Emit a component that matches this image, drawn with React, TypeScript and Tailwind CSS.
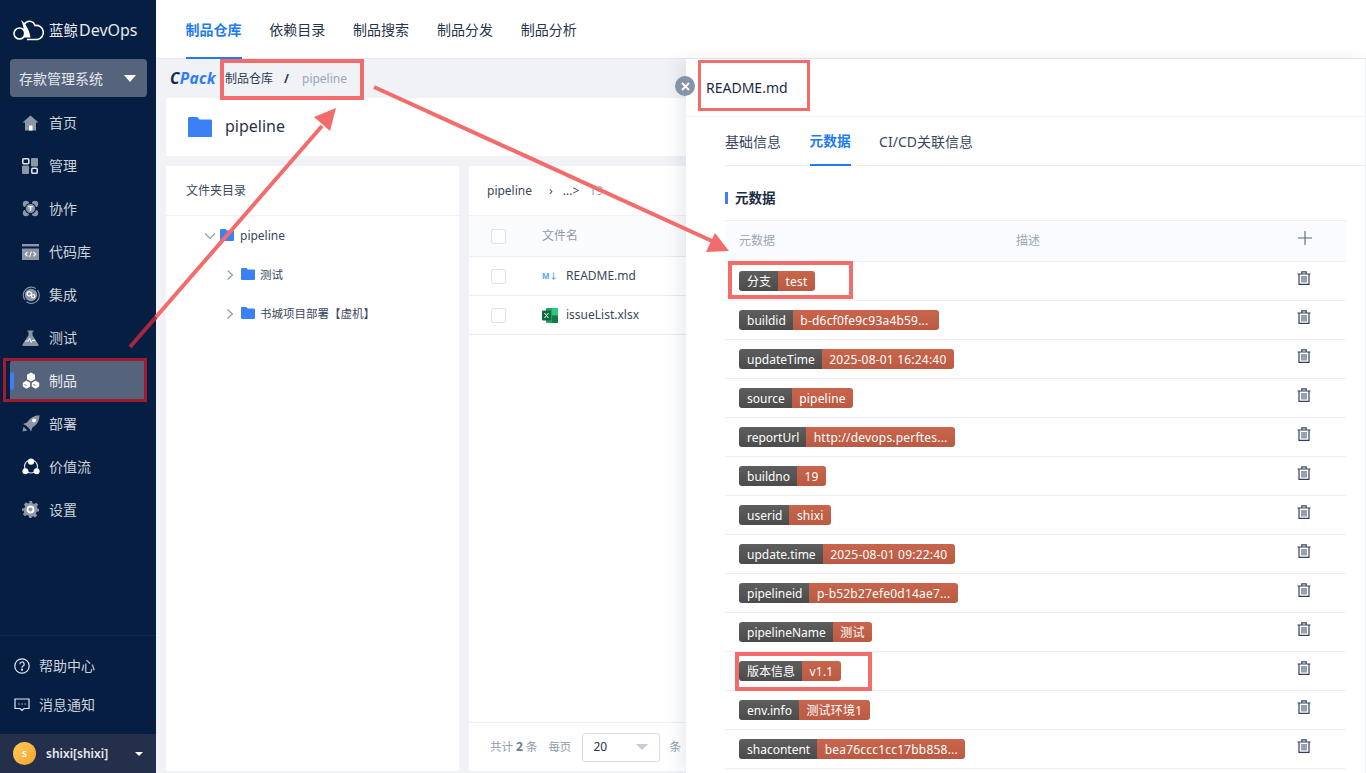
import React from "react";

const G = "#8b96a8";
const HomeI = () => (<svg width="17" height="16" viewBox="0 0 17 16"><path d="M8.5 0.5 L16.5 7.5 L14 7.5 L14 15.5 L3 15.5 L3 7.5 L0.5 7.5 Z" fill={G}/><rect x="7" y="10.5" width="3.5" height="5" fill="#fff"/></svg>);
const MgmtI = () => (<svg width="16" height="16" viewBox="0 0 16 16"><rect x="0.8" y="0.8" width="6" height="5" rx="1" fill="none" stroke="#dfe3ea" strokeWidth="1.6"/><rect x="9" y="0" width="7" height="8.5" rx="1" fill={G}/><rect x="0" y="7.5" width="7" height="8.5" rx="1" fill={G}/><rect x="9.8" y="10.3" width="5.4" height="5" rx="1" fill="none" stroke="#dfe3ea" strokeWidth="1.6"/></svg>);
const CollabI = () => (<svg width="17" height="17" viewBox="0 0 17 17"><circle cx="4" cy="4" r="3.2" fill={G}/><circle cx="13" cy="4" r="3.2" fill={G}/><circle cx="4" cy="13" r="3.2" fill={G}/><circle cx="13" cy="13" r="3.2" fill={G}/><circle cx="8.5" cy="8.5" r="5.6" fill="#051e42"/><circle cx="8.5" cy="8.5" r="4.6" fill={G}/><path d="M6.3 6.6h4.4M8.5 6.6v4.4" stroke="#fff" strokeWidth="1.4"/></svg>);
const CodeI = () => (<svg width="17" height="16" viewBox="0 0 17 16"><rect x="0" y="0" width="17" height="2.4" fill={G}/><rect x="0" y="4.5" width="17" height="11.5" fill={G}/><path d="M5.5 8 L3.4 10.2 L5.5 12.4 M11.5 8 L13.6 10.2 L11.5 12.4 M9.4 7.6 L7.6 12.8" fill="none" stroke="#fff" strokeWidth="1.1"/></svg>);
const IntegI = () => (<svg width="18" height="18" viewBox="0 0 18 18"><path d="M3 14A8 8 0 0 1 14 2.6M15.4 4.2A8 8 0 0 1 4.5 15.8" fill="none" stroke={G} strokeWidth="1.1"/><circle cx="9" cy="9" r="6.2" fill={G}/><circle cx="7.2" cy="7.8" r="2.1" fill="none" stroke="#fff" strokeWidth="1.2"/><circle cx="11.2" cy="10.2" r="1.7" fill="none" stroke="#fff" strokeWidth="1.2"/></svg>);
const TestI = () => (<svg width="17" height="16" viewBox="0 0 17 16"><path d="M5.5 0.5h6v1.2h-1v3.6l6 9.2c.4.7 0 1.5-.8 1.5H1.3c-.8 0-1.2-.8-.8-1.5l6-9.2V1.7h-1z" fill={G}/><path d="M3.4 11h3l1.2-3 1.6 4.4 1.1-2h3" fill="none" stroke="#fff" strokeWidth="1"/></svg>);
const ProductI = () => (<svg width="18" height="17" viewBox="0 0 18 17"><path d="M9 0.5 L13 2.8 V7.2 L9 9.5 L5 7.2 V2.8 Z" fill="#fff"/><path d="M4.5 8.5 L8.2 10.7 V14.6 L4.5 16.8 L0.8 14.6 V10.7 Z" fill="#fff"/><path d="M13.5 8.5 L17.2 10.7 V14.6 L13.5 16.8 L9.8 14.6 V10.7 Z" fill="#fff"/><path d="M2.5 12.5l2 1M11.5 12.5l2 1" stroke="#55637d" strokeWidth=".9"/></svg>);
const DeployI = () => (<svg width="18" height="17" viewBox="0 0 18 17"><path d="M17.5 0.3 C12 .6 7.8 3 5 7.5 L1 9 L4 10.5 L7.4 13.8 L9 16.6 L10.5 12.4 C15 9.8 17.4 5.8 17.5 0.3Z" fill={G}/><circle cx="12" cy="5.6" r="2" fill="#fff"/><path d="M0.5 16.5 L1.5 11.8 L5.4 15.6Z" fill={G}/></svg>);
const ValueI = () => (<svg width="18" height="17" viewBox="0 0 18 17"><circle cx="9" cy="8.5" r="6.5" fill="none" stroke="#dfe3ea" strokeWidth="1.2"/><circle cx="9" cy="3.6" r="3.2" fill="#fff"/><circle cx="3.4" cy="13.2" r="3" fill="#fff"/><circle cx="14.6" cy="13.2" r="3" fill="#fff"/></svg>);
const GearI = () => (<svg width="17" height="17" viewBox="0 0 17 17"><path d="M7 0h3l.5 2.3 1.6.7 2-1.3 2.1 2.1-1.3 2 .7 1.6L17 7.9v2.4l-2.4.5-.7 1.6 1.3 2-2.1 2.1-2-1.3-1.6.7L9.9 17H7.1l-.5-2.3-1.6-.7-2 1.3-2.1-2.1 1.3-2-.7-1.6L0 10.1V7.5l2.5-.5.7-1.6-1.3-2L4 1.3l2 1.3 1.6-.7z" fill={G}/><circle cx="8.5" cy="8.5" r="3" fill="none" stroke="#fff" strokeWidth="1.8"/></svg>);

const Trash = () => (
  <svg className="-mt-[7px]" width="14" height="14" viewBox="0 0 14 14" fill="none" stroke="#33435f" strokeWidth="1.2"><path d="M0.5 3h13M4.8 3V.8h4.4V3M2 3v10.4h10V3"/><path d="M5 5v6.5M7 5v6.5M9 5v6.5" strokeWidth="1"/></svg>
);
const BlueFolder = ({ s = 14 }: { s?: number }) => (
  <svg width={s} height={s * 0.86} viewBox="0 0 24 20.6"><path d="M1.5 0H8.5c.7 0 1.2.3 1.6.8L11.5 2.6H22.5C23.3 2.6 24 3.3 24 4.1V19c0 .9-.7 1.6-1.5 1.6H1.5C.7 20.6 0 19.9 0 19V1.5C0 .7.7 0 1.5 0Z" fill="#3c80f6"/></svg>
);

const nav = [
  ["首页", <HomeI />], ["管理", <MgmtI />], ["协作", <CollabI />], ["代码库", <CodeI />], ["集成", <IntegI />],
  ["测试", <TestI />], ["制品", <ProductI />], ["部署", <DeployI />], ["价值流", <ValueI />], ["设置", <GearI />],
] as const;

const meta: [string, string][] = [
  ["分支", "test"], ["buildid", "b-d6cf0fe9c93a4b59...\u00a0"], ["updateTime", "2025-08-01 16:24:40"], ["source", "pipeline"],
  ["reportUrl", "http://devops.perftes..."], ["buildno", "19"], ["userid", "shixi"], ["update.time", "2025-08-01 09:22:40"],
  ["pipelineid", "p-b52b27efe0d14ae7..."], ["pipelineName", "测试"], ["版本信息", "v1.1"], ["env.info", "测试环境1"], ["shacontent", "bea76ccc1cc17bb858..."],
];

const Chevron = () => (<svg width="8" height="12" viewBox="0 0 8 12" fill="none" stroke="#8c98aa" strokeWidth="1.1"><path d="M1.5 1.5 L6.5 6 L1.5 10.5"/></svg>);
const Check = () => <div className="w-[15px] h-[15px] rounded-[2px] border border-[#dde3ec] bg-white shrink-0" />;

export default function App() {
  return (
    <div className="relative w-[1366px] h-[773px] overflow-hidden flex bg-[#f0f2f6] text-[#1c2b45]" style={{ fontFamily: '"Noto Sans","Noto Sans CJK SC",sans-serif' }}>
      <aside className="w-[156px] shrink-0 h-full bg-[#051e42] flex flex-col">
        <div className="h-[59px] flex items-center pl-[13px] gap-[4px] text-[#e6e9ee]">
          <svg width="32" height="22" viewBox="0 0 32 22" fill="none" stroke="#fff" strokeWidth="1.6">
            <circle cx="6.500" cy="14.500" r="5.500" />
            <path d="M11 5.500 C14 1 20 1 22 6.500 A7 7 0 1 1 24.500 20.500 H14" />
            <path d="M8 1 C13 5 16.500 11 17.500 18.500 L10.500 18.500 C11.500 12 10.500 6 8 1Z" fill="#fff" stroke="none" />
          </svg>
          <span className="text-[14.500px] whitespace-nowrap">蓝鲸<span className="text-[16px] ml-[1px]">DevOps</span></span>
        </div>
        <div className="ml-[10px] mr-[9px] h-[38px] rounded-[4px] bg-[#55637d] flex items-center justify-between pl-[9px] pr-[11px] text-[14px] text-[#e4e7ec]">
          <span>存款管理系统</span>
          <span className="w-0 h-0 border-x-[6px] border-x-transparent border-t-[7px] border-t-white" />
        </div>
        <nav className="mt-[4px] flex flex-col">
          {nav.map(([t, ic]) => (
            <div key={t} className="h-[43px] flex items-center">
              <div className={`relative mx-[10px] w-[137px] h-[39px] flex items-center pl-[12px] rounded-[2px] text-[14px] ${t === "制品" ? "bg-[#55637d] text-[#e8ebf0]" : "text-[#cdd2db]"}`}>
                {t === "制品" && <span className="absolute left-0 top-[11px] w-[4px] h-[18px] rounded-[2px] bg-[#3c80f6]" />}
                <span className="w-[27px] flex items-center">{ic}</span>
                {t}
              </div>
            </div>
          ))}
        </nav>
        <div className="mt-auto border-t border-[#10294e] pt-[10px]">
          {[
            ["帮助中心", <svg width="16" height="16" viewBox="0 0 16 16" fill="none" stroke="#e6e9ee" strokeWidth="1.2"><circle cx="8" cy="8" r="7.2"/><path d="M5.8 6.2a2.2 2.2 0 1 1 3.3 1.9C8.4 8.500 8 9 8 9.800"/><circle cx="8" cy="11.700" r=".5" fill="#e6e9ee"/></svg>],
            ["消息通知", <svg width="16" height="14" viewBox="0 0 16 14" fill="none" stroke="#e6e9ee" strokeWidth="1.2"><path d="M1 1h14v9.500H10L8 12.500 6 10.500H1z"/><path d="M4.500 6h.8M7.600 6h.8M10.700 6h.8" strokeWidth="1.400"/></svg>],
          ].map(([t, ic]) => (
            <div key={t as string} className="h-[39px] flex items-center pl-[14px] gap-[9px] text-[14px] text-[#cdd2db]">{ic}<span>{t}</span></div>
          ))}
          <div className="mt-[10px] h-[39px] bg-[#242f4b] flex items-center pl-[13px] pr-[13px] text-[#e8ebf0]">
            <span className="w-[23px] h-[23px] rounded-full bg-gradient-to-br from-[#fdc95a] to-[#f5a623] flex items-center justify-center text-[10px] text-white font-semibold">s</span>
            <span className="ml-[10px] text-[12px] font-semibold whitespace-nowrap">shixi[shixi]</span>
            <span className="ml-auto w-0 h-0 border-x-[4px] border-x-transparent border-t-[4px] border-t-white" />
          </div>
        </div>
      </aside>

      <div className="flex-1 min-w-0 flex flex-col">
        <header className="h-[59px] shrink-0 bg-white border-b border-[#e6e9ef] flex pl-[29.500px] gap-[27.800px] text-[14px] text-[#27344a]">
          {["制品仓库", "依赖目录", "制品搜索", "制品分发", "制品分析"].map((t, i) => (
            <div key={t} className={`h-[59px] flex items-center ${i === 0 ? "relative text-[#1e7bf0] font-semibold" : ""}`}>
              {t}
              {i === 0 && <span className="absolute left-0 right-0 bottom-0 h-[2px] bg-[#1e7bf0]" />}
            </div>
          ))}
        </header>
        <div className="h-[39px] shrink-0 flex items-center pl-[14px] text-[12px]">
          <span className="text-[15.500px] font-bold italic tracking-[0.3px] w-[55px]"><span className="text-[#122a52]">C</span><span className="text-[#2f7df6]">Pack</span></span>
          <span className="text-[#2b3a52]">制品仓库</span>
          <span className="ml-[11px] mr-[13px] font-bold text-[#2b3a52]">/</span>
          <span className="text-[12px] text-[#9aa6b6]">pipeline</span>
        </div>
        <div className="ml-[10px] h-[58px] shrink-0 bg-white flex items-center pl-[22px] gap-[13px]">
          <BlueFolder s={24} />
          <span className="text-[16px] text-[#27344a] -mt-[2px]">pipeline</span>
        </div>
        <div className="flex-1 min-h-0 ml-[10px] mt-[10px] mb-[2px] flex gap-[10px]">
          <section className="w-[293px] bg-white shrink-0">
            <div className="h-[50px] flex items-center pl-[20px] text-[12px] border-b border-[#f0f2f6] text-[#3a475c]">文件夹目录</div>
            <div className="h-[39px] flex items-center pl-[38px] text-[12px] text-[#3a475c]">
              <svg width="12" height="8" viewBox="0 0 12 8" fill="none" stroke="#8c98aa" strokeWidth="1.1"><path d="M1 1.500 L6 6.500 L11 1.500"/></svg>
              <span className="ml-[4px] mr-[6px]"><BlueFolder /></span>pipeline
            </div>
            <div className="h-[39px] flex items-center pl-[60px] text-[11.500px] text-[#3a475c]">
              <Chevron /><span className="ml-[7px] mr-[5px]"><BlueFolder /></span>测试
            </div>
            <div className="h-[39px] flex items-center pl-[60px] text-[11.500px] text-[#3a475c]">
              <Chevron /><span className="ml-[7px] mr-[5px]"><BlueFolder /></span>书城项目部署【虚机】
            </div>
          </section>
          <section className="flex-1 bg-white flex flex-col">
            <div className="h-[50px] flex items-center pl-[18px] text-[12px] text-[#3a475c] border-b border-[#f0f2f6]">
              <span>pipeline</span>
              <span className="ml-[17px]">›</span>
              <span className="ml-[10px]">...&gt;</span>
              <span className="ml-[10px] text-[#9aa6b6]">19</span>
            </div>
            <div className="h-[41px] shrink-0 flex items-center pl-[22px] bg-[#fafbfd] border-b border-[#e9ecf1] text-[12px] text-[#8f9bad]">
              <Check /><span className="ml-[36px]">文件名</span>
            </div>
            <div className="h-[39px] shrink-0 flex items-center pl-[22px] border-b border-[#e9ecf1] text-[12px] text-[#3a475c]">
              <Check />
              <span className="ml-[36px] w-[24px] text-[8px] font-bold text-[#56a6ee]">M↓</span>README.md
            </div>
            <div className="h-[39px] shrink-0 flex items-center pl-[22px] border-b border-[#e9ecf1] text-[12px] text-[#3a475c]">
              <Check />
              <span className="ml-[36px] w-[24px]">
                <svg width="16" height="15" viewBox="0 0 16 15"><rect x="4" y="0" width="12" height="15" rx="1" fill="#21a366"/><rect x="10" y="0" width="6" height="7.500" fill="#33c481"/><rect x="10" y="7.500" width="6" height="7.500" fill="#107c41"/><rect x="0" y="2.500" width="9" height="10" rx="1" fill="#0f6b3a"/><path d="M2.500 5l4 5M6.500 5l-4 5" stroke="#fff" strokeWidth="1"/></svg>
              </span>issueList.xlsx
            </div>
            <div className="mt-auto h-[49px] border-t border-[#eef0f4] flex items-center pl-[21px] text-[11.500px] text-[#8f9bad]">
              共计 <b className="mx-[3px] text-[12px] text-[#6e7b90]">2</b> 条
              <span className="ml-[11px]">每页</span>
              <div className="ml-[11px] w-[78px] h-[29px] rounded-[3px] border border-[#d9dfe8] flex items-center justify-between pl-[10px] pr-[11px] text-[12px] text-[#27344a]">
                20<span className="w-0 h-0 border-x-[6px] border-x-transparent border-t-[6px] border-t-[#c3ccd8]" />
              </div>
              <span className="ml-[9px]">条</span>
            </div>
          </section>
        </div>
      </div>

      {/* drawer */}
      <aside className="absolute left-[686px] top-[59px] bottom-0 right-0 bg-white shadow-[-8px_0_14px_rgba(80,95,120,0.10)] border-r border-[#eef0f4] flex flex-col">
        <div className="h-[58px] shrink-0 flex items-center pl-[20px] text-[14px] text-[#1c2b45] border-b border-[#f2f4f7]">README.md</div>
        <div className="h-[49px] shrink-0 ml-[39px] flex gap-[28.500px] border-b border-[#e9ecf1] text-[14px] text-[#3a475c]">
          {["基础信息", "元数据", "CI/CD关联信息"].map((t, i) => (
            <div key={t} className={`relative h-[49px] flex items-center ${i === 1 ? "text-[13.700px] text-[#1e7bf0] font-semibold" : ""}`}>
              {t}
              {i === 1 && <span className="absolute left-0 right-0 bottom-0 h-[2px] bg-[#1e7bf0]" />}
            </div>
          ))}
        </div>
        <div className="ml-[39px] mr-[19px] flex flex-col">
          <div className="h-[54px] flex items-end pb-[12px] text-[13.500px] leading-[20px] font-bold text-[#1c2b45]">
            <span className="w-[3px] h-[12px] bg-[#3c80f6] mr-[7px] mb-[4px]" />元数据
          </div>
          <div className="h-[42px] flex items-center bg-[#fafbfe] border-y border-[#eceff4] pl-[14px] text-[12px] text-[#9aa6b6]">
            <span className="w-[277px]">元数据</span>
            <span>描述</span>
            <svg className="ml-auto mr-[34px] -mt-[6px]" width="14" height="14" viewBox="0 0 14 14" stroke="#56657f" strokeWidth="1.100"><path d="M7 0v14M0 7h14"/></svg>
          </div>
          {meta.map(([k, v]) => (
            <div key={k} className="h-[39px] shrink-0 flex items-center justify-between border-b border-[#eceff4] pl-[14px] pr-[35px] text-[12px] leading-[22px] text-white">
              <div className="flex h-[20px] rounded-[3px] overflow-hidden whitespace-nowrap">
                <span className="pl-[8px] pr-[7px] bg-gradient-to-b from-[#5e5e5e] to-[#4b4b4b]">{k}</span>
                <span className="px-[7.500px] tracking-[0.2px] bg-gradient-to-b from-[#c8654c] to-[#bb5a43]">{v}</span>
              </div>
              <Trash />
            </div>
          ))}
        </div>
      </aside>
      <div className="absolute left-[675px] top-[76px] w-[20px] h-[20px] rounded-full bg-[#8593a6] flex items-center justify-center">
        <svg width="9" height="9" viewBox="0 0 9 9" stroke="#fff" strokeWidth="1.800"><path d="M1 1l7 7M8 1L1 8"/></svg>
      </div>

      {/* red annotations */}
      <div className="absolute left-[220px] top-[59px] w-[144px] h-[41px] border-[4px] border-[#f26c6c]" />
      <div className="absolute left-[698px] top-[60px] w-[112px] h-[51px] border-[3px] border-[#f26c6c]" />
      <div className="absolute left-[728px] top-[261px] w-[125px] h-[38px] border-[4px] border-[#f26c6c]" />
      <div className="absolute left-[735px] top-[652px] w-[137px] h-[39px] border-[4px] border-[#f26c6c]" />
      <div className="absolute left-[3px] top-[358px] w-[144px] h-[44px] border-[3px] border-[#a01c2c]" />
      <svg className="absolute inset-0 pointer-events-none" width="1366" height="773" viewBox="0 0 1366 773">
        <path d="M130 347 L156 317" stroke="#a5293a" strokeWidth="4" fill="none" />
        <path d="M156 317 L322 126" stroke="#f26c6c" strokeWidth="4" fill="none" />
        <path d="M336 108 L314 117 L330 131 Z" fill="#f26c6c" />
        <path d="M374 87 L712 241" stroke="#f26c6c" strokeWidth="4" fill="none" />
        <path d="M729 251 L706 252 L715 233 Z" fill="#f26c6c" />
      </svg>
    </div>
  );
}
